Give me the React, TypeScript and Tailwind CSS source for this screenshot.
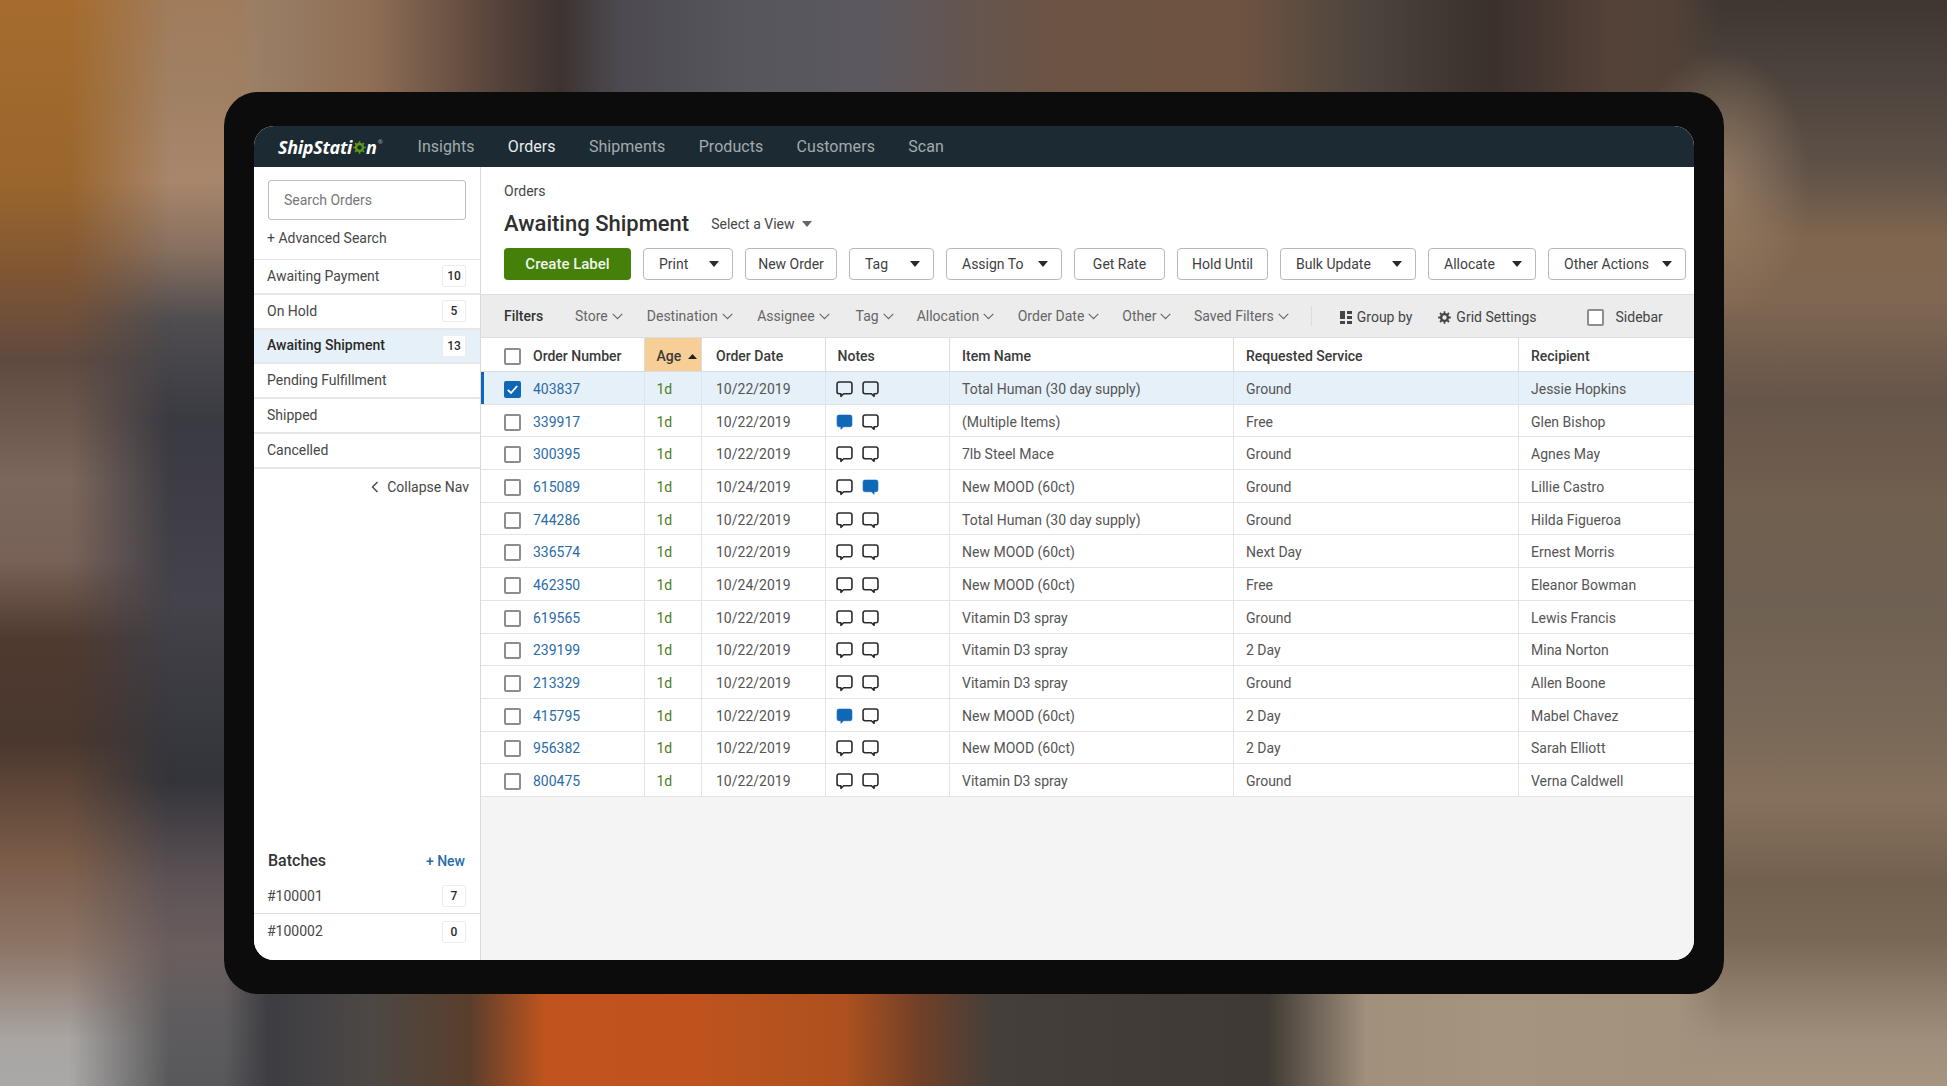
import React from "react";

const rows: [string, string, string, string, string, number][] = [
  ["403837", "10/22/2019", "Total Human (30 day supply)", "Ground", "Jessie Hopkins", 0],
  ["339917", "10/22/2019", "(Multiple Items)", "Free", "Glen Bishop", 1],
  ["300395", "10/22/2019", "7lb Steel Mace", "Ground", "Agnes May", 0],
  ["615089", "10/24/2019", "New MOOD (60ct)", "Ground", "Lillie Castro", 2],
  ["744286", "10/22/2019", "Total Human (30 day supply)", "Ground", "Hilda Figueroa", 0],
  ["336574", "10/22/2019", "New MOOD (60ct)", "Next Day", "Ernest Morris", 0],
  ["462350", "10/24/2019", "New MOOD (60ct)", "Free", "Eleanor Bowman", 0],
  ["619565", "10/22/2019", "Vitamin D3 spray", "Ground", "Lewis Francis", 0],
  ["239199", "10/22/2019", "Vitamin D3 spray", "2 Day", "Mina Norton", 0],
  ["213329", "10/22/2019", "Vitamin D3 spray", "Ground", "Allen Boone", 0],
  ["415795", "10/22/2019", "New MOOD (60ct)", "2 Day", "Mabel Chavez", 1],
  ["956382", "10/22/2019", "New MOOD (60ct)", "2 Day", "Sarah Elliott", 0],
  ["800475", "10/22/2019", "Vitamin D3 spray", "Ground", "Verna Caldwell", 0],
];

const GRID = "grid grid-cols-[163.5px_57.5px_123.5px_124.5px_284px_285px_175px]";

function Bubble({ tail, filled }: { tail: "l" | "r"; filled?: boolean }) {
  const d =
    tail === "l"
      ? "M2.8 1h10.4A1.8 1.8 0 0 1 15 2.8v7.4A1.8 1.8 0 0 1 13.2 12H7.2L4.6 14.4V12H2.8A1.8 1.8 0 0 1 1 10.2V2.8A1.8 1.8 0 0 1 2.8 1Z"
      : "M2.8 1h10.4A1.8 1.8 0 0 1 15 2.8v7.4A1.8 1.8 0 0 1 13.2 12h-1.8v2.4L8.8 12H2.8A1.8 1.8 0 0 1 1 10.2V2.8A1.8 1.8 0 0 1 2.8 1Z";
  return (
    <svg width="17" height="17" viewBox="0 0 16 16" className="shrink-0">
      <path
        d={d}
        fill={filled ? "#0f67b8" : "none"}
        stroke={filled ? "#0f67b8" : "#2b2b2b"}
        strokeWidth={filled ? 0.6 : 1.5}
        strokeLinejoin="round"
      />
    </svg>
  );
}

function Check({ on }: { on?: boolean }) {
  if (on) {
    return (
      <span className="flex h-[17px] w-[17px] shrink-0 items-center justify-center rounded-[2px] bg-[#0f67b8]">
        <svg width="13" height="13" viewBox="0 0 13 13">
          <path d="M1.8 6.8 5 10l6.2-7" fill="none" stroke="#fff" strokeWidth="1.8" />
        </svg>
      </span>
    );
  }
  return <span className="block h-[17px] w-[17px] shrink-0 rounded-[2px] border-2 border-[#8d8d8d] bg-white" />;
}

function Caret({ color = "#2a2a2a" }: { color?: string }) {
  return (
    <svg width="10" height="6" viewBox="0 0 10 6" className="shrink-0">
      <path d="M0 0h10L5 6Z" fill={color} />
    </svg>
  );
}

function Chevron() {
  return (
    <svg width="11" height="7" viewBox="0 0 11 7" className="ml-[4px] shrink-0">
      <path d="M.7.8 5.5 5.6 10.3.8" fill="none" stroke="#666" strokeWidth="1.1" />
    </svg>
  );
}

function Btn({ label, w, caret }: { label: string; w: string; caret?: boolean }) {
  return (
    <div
      className={`flex h-[32px] items-center rounded-[4px] border border-[#b9b9b9] bg-white text-[14px] text-[#3f3f3f] ${w} ${
        caret ? "justify-between pl-[15px] pr-[13px]" : "justify-center"
      }`}
    >
      <span>{label}</span>
      {caret && <Caret />}
    </div>
  );
}

function Badge({ n }: { n: number }) {
  return (
    <span className="flex h-[22px] w-[24px] items-center justify-center rounded-[2px] border border-[#ececec] bg-white text-[12px] font-medium text-[#2c2c2c]">
      {n}
    </span>
  );
}

function NavRow({ label, n, active }: { label: string; n?: number; active?: boolean }) {
  return (
    <div
      className={`flex h-[34.8px] items-center justify-between border-b-2 border-[#e6e6e6] pl-[13px] pr-[14px] text-[14px] ${
        active ? "bg-[#e6f0f8] font-medium text-[#2a2a2a]" : "text-[#474747]"
      }`}
    >
      <span>{label}</span>
      {n !== undefined && <Badge n={n} />}
    </div>
  );
}

function Filter({ label, className }: { label: string; className: string }) {
  return (
    <span className={`flex items-center text-[14px] text-[#666] ${className}`}>
      {label}
      <Chevron />
    </span>
  );
}

function Th({ label, className = "" }: { label: string; className?: string }) {
  return (
    <div className={`flex items-center border-r border-[#dcdcdc] pl-[12px] pt-[3px] text-[14px] font-medium text-[#3a3a3a] ${className}`}>
      {label}
    </div>
  );
}

export default function App() {
  return (
    <div className="relative h-[1086px] w-full overflow-hidden bg-[#55504c] pl-[224px] pt-[92px] font-['Roboto',sans-serif]">
      <div className="absolute inset-x-0 top-0 h-[140px] bg-[linear-gradient(90deg,#a56c2e_0px,#a56c2e_160px,#9a8068_250px,#8f6e55_370px,#55423a_500px,#3c3330_560px,#4c4a50_620px,#56565c_745px,#5c5860_870px,#64564f_970px,#6c5343_1055px,#6e5340_1240px,#4c443e_1365px,#3a302c_1490px,#544238_1614px,#4a4038_1800px,#3b3633_1947px)]" />
      <div className="absolute inset-x-0 bottom-0 h-[140px] bg-[linear-gradient(90deg,#a8a5a0_0px,#a8a5a0_150px,#3a3b40_225px,#3d3d42_270px,#4c4845_370px,#5a3e2c_470px,#c0541e_545px,#bf531e_695px,#ad511f_845px,#704028_920px,#443f3a_993px,#403b37_1180px,#3f3a35_1267px,#a0907c_1366px,#a5947f_1490px,#a0907c_1947px)]" />
      <div className="absolute bottom-0 left-0 top-0 w-[270px] bg-[linear-gradient(180deg,#a07c5c_0px,#a08063_90px,#a8866c_180px,#877060_250px,#4f4d50_320px,#3a3a42_420px,#44424a_600px,#33343a_780px,#5c5256_880px,#6a5e5e_950px,#5e5c5e_1020px,#58585a_1086px)] [mask-image:linear-gradient(90deg,#000_225px,transparent_270px)]" />
      <div className="absolute bottom-0 left-0 top-0 w-[170px] bg-[linear-gradient(180deg,#a56c2e_0px,#9a662d_180px,#7d5535_280px,#5f4a40_360px,#7c675c_480px,#786258_560px,#4f3a30_640px,#4a372e_740px,#7a5c48_860px,#8d7668_950px,#a8a5a3_1040px,#aaa8a6_1086px)] [mask-image:linear-gradient(90deg,#000_70px,transparent_170px)]" />
      <div className="absolute bottom-0 right-0 top-0 w-[270px] bg-[linear-gradient(180deg,#3f3632_0px,#4b423c_70px,#5f5248_170px,#80664f_240px,#7f6752_300px,#66554a_400px,#71604f_500px,#6e6052_600px,#786858_720px,#85705c_800px,#73614f_880px,#7a6857_940px,#a08f7c_1040px,#a5947f_1086px)] [mask-image:linear-gradient(270deg,#000_225px,transparent_270px)]" />
      <div className="absolute left-[1630px] top-[50px] h-[270px] w-[180px] rounded-full bg-[radial-gradient(closest-side,#a0846acc,#a0846a00)]" />

      <div className="relative h-[902px] w-[1500px] rounded-[34px] bg-[#0c0c0c] px-[30px] pb-[34px] pt-[34px]">
        <div className="flex h-full flex-col overflow-hidden rounded-[20px] bg-white">
          {/* Top nav */}
          <header className="flex h-[41px] shrink-0 items-center bg-[#1c2b33] pl-[24px]">
            <div className="flex w-[139.5px] items-center font-['Open_Sans',sans-serif] text-[18px] font-bold italic leading-none tracking-[-0.3px] text-white">
              <span>ShipStati</span>
              <svg width="13" height="13" viewBox="0 0 12 12" className="mx-[0.5px] mt-[2px] shrink-0">
                <circle cx="6" cy="6" r="3.2" fill="none" stroke="#5d9b1f" strokeWidth="2.2" />
                <path d="M6 .2v2M6 9.8v2M.2 6h2M9.8 6h2M1.9 1.9l1.4 1.4M8.7 8.7l1.4 1.4M1.9 10.1l1.4-1.4M8.7 3.3l1.4-1.4" stroke="#5d9b1f" strokeWidth="1.5" />
              </svg>
              <span>n</span>
              <span className="mb-[9px] ml-[1px] text-[6px] not-italic text-[#9aa2a6]">®</span>
            </div>
            <nav className="flex items-center gap-[33.3px] text-[16px] tracking-[0.05px] text-[#a2aaae]">
              <span>Insights</span>
              <span className="text-[#e8ecee]">Orders</span>
              <span>Shipments</span>
              <span>Products</span>
              <span>Customers</span>
              <span>Scan</span>
            </nav>
          </header>

          <div className="flex min-h-0 flex-1">
            {/* Sidebar */}
            <aside className="flex w-[227px] shrink-0 flex-col border-r border-[#dadada] bg-white">
              <div className="mx-[14px] mt-[13px] flex h-[40px] items-center rounded-[3px] border border-[#bdbdbd] pl-[15px] text-[14px] text-[#777]">
                Search Orders
              </div>
              <div className="mb-[11px] ml-[13px] mt-[8px] text-[14px] leading-[20px] text-[#474747]">+ Advanced Search</div>
              <div className="border-t border-[#e2e2e2]">
                <NavRow label="Awaiting Payment" n={10} />
                <NavRow label="On Hold" n={5} />
                <NavRow label="Awaiting Shipment" n={13} active />
                <NavRow label="Pending Fulfillment" />
                <NavRow label="Shipped" />
                <NavRow label="Cancelled" />
              </div>
              <div className="mt-[8px] flex items-center justify-end pr-[11px] text-[14px] text-[#474747]">
                <svg width="8" height="12" viewBox="0 0 8 12" className="mr-[8px]">
                  <path d="M6.5 1 1.5 6l5 5" fill="none" stroke="#474747" strokeWidth="1.4" />
                </svg>
                Collapse Nav
              </div>
              <div className="mt-auto">
                <div className="flex h-[26px] items-center justify-between pl-[14px] pr-[15px]">
                  <span className="text-[16px] font-medium text-[#333]">Batches</span>
                  <span className="text-[14px] font-medium text-[#2a6ca8]">+ New</span>
                </div>
                <div className="mt-[5px] flex h-[35px] items-center justify-between border-b border-[#e0e0e0] pl-[13px] pr-[14px] text-[14px] text-[#474747]">
                  <span>#100001</span>
                  <Badge n={7} />
                </div>
                <div className="mb-[11px] flex h-[35px] items-center justify-between pl-[13px] pr-[14px] text-[14px] text-[#474747]">
                  <span>#100002</span>
                  <Badge n={0} />
                </div>
              </div>
            </aside>

            {/* Main */}
            <main className="flex min-w-0 flex-1 flex-col bg-[#f4f4f4]">
              <div className="h-[127px] shrink-0 bg-white pl-[23px] pt-[14px]">
                <div className="text-[14px] leading-[20px] text-[#474747]">Orders</div>
                <div className="mt-[7px] flex h-[32px] items-center">
                  <h1 className="-mt-[2px] text-[22px] font-medium text-[#2f2f2f]">Awaiting Shipment</h1>
                  <span className="ml-[22px] flex items-center text-[14px] text-[#474747]">
                    Select a View
                    <span className="ml-[8px]"><Caret color="#666" /></span>
                  </span>
                </div>
                <div className="mt-[8px] flex gap-[12px]">
                  <div className="flex h-[32px] w-[127px] items-center justify-center rounded-[4px] bg-[#44800a] text-[15px] font-medium text-[#eef5e6]">
                    Create Label
                  </div>
                  <Btn label="Print" w="w-[90px]" caret />
                  <Btn label="New Order" w="w-[92px]" />
                  <Btn label="Tag" w="w-[85px]" caret />
                  <Btn label="Assign To" w="w-[116px]" caret />
                  <Btn label="Get Rate" w="w-[91px]" />
                  <Btn label="Hold Until" w="w-[91px]" />
                  <Btn label="Bulk Update" w="w-[136px]" caret />
                  <Btn label="Allocate" w="w-[108px]" caret />
                  <Btn label="Other Actions" w="w-[138px]" caret />
                </div>
              </div>

              {/* Filters */}
              <div className="flex h-[44px] shrink-0 items-center border-y border-[#dedede] bg-[#ececec] pl-[23px]">
                <span className="w-[71px] text-[14px] font-medium text-[#333]">Filters</span>
                <Filter label="Store" className="mr-[24px]" />
                <Filter label="Destination" className="mr-[24.5px]" />
                <Filter label="Assignee" className="mr-[26px]" />
                <Filter label="Tag" className="mr-[23px]" />
                <Filter label="Allocation" className="mr-[23.5px]" />
                <Filter label="Order Date" className="mr-[23px]" />
                <Filter label="Other" className="mr-[22.5px]" />
                <Filter label="Saved Filters" className="mr-[22.5px]" />
                <span className="h-[20px] w-px bg-[#dcdcdc]" />
                <span className="ml-[27.5px] mt-[2px] flex items-center text-[14px] text-[#444]">
                  <svg width="12" height="13" viewBox="0 0 12 13" className="mr-[5px]">
                    <path d="M0 0h5v8H0ZM7 0h5v3H7ZM7 5h5v3H7ZM0 10h5v3H0ZM7 10h5v3H7Z" fill="#444" />
                  </svg>
                  Group by
                </span>
                <span className="ml-[26px] mt-[2px] flex items-center text-[14px] text-[#444]">
                  <svg width="13" height="13" viewBox="0 0 13 13" className="mr-[5px]">
                    <circle cx="6.5" cy="6.5" r="3.4" fill="none" stroke="#444" strokeWidth="2.4" />
                    <path d="M6.5.2v2.2M6.5 10.6v2.2M.2 6.5h2.2M10.6 6.5h2.2M2 2l1.6 1.6M9.4 9.4 11 11M2 11l1.6-1.6M9.4 3.6 11 2" stroke="#444" strokeWidth="1.8" />
                  </svg>
                  Grid Settings
                </span>
                <span className="ml-[50px] mt-[2px] flex items-center text-[14px] text-[#444]">
                  <span className="mr-[12px] block"><Check /></span>
                  Sidebar
                </span>
              </div>

              {/* Table */}
              <div className={`${GRID} h-[34px] shrink-0 border-b border-[#dcdcdc] bg-white`}>
                <div className="flex items-center gap-[12px] border-r border-[#dcdcdc] pl-[23px] pt-[3px] text-[14px] font-medium text-[#3a3a3a]">
                  <Check />
                  Order Number
                </div>
                <div className="flex items-center border-r border-[#dcdcdc] bg-[#f7cf96] pl-[12px] pt-[3px] text-[14px] font-medium text-[#3a3a3a]">
                  Age
                  <svg width="9" height="5" viewBox="0 0 9 5" className="ml-[7px]">
                    <path d="M0 5h9L4.5 0Z" fill="#222" />
                  </svg>
                </div>
                <Th label="Order Date" className="pl-[14px]" />
                <Th label="Notes" className="pl-[12.5px]" />
                <Th label="Item Name" />
                <Th label="Requested Service" />
                <Th label="Recipient" className="border-r-0" />
              </div>
              {rows.map((r, i) => (
                <div
                  key={r[0]}
                  className={`${GRID} h-[32.7px] shrink-0 border-b border-[#e4e4e4] text-[14px] text-[#555] ${i === 0 ? "bg-[#e6f0f8]" : "bg-white"}`}
                >
                  <div className={`flex items-center gap-[12px] border-r border-[#e4e4e4] pl-[23px] pt-[3px] ${i === 0 ? "shadow-[inset_3px_0_0_#0f67b8]" : ""}`}>
                    <Check on={i === 0} />
                    <span className="text-[#2a6ca8]">{r[0]}</span>
                  </div>
                  <div className="flex items-center border-r border-[#e4e4e4] pl-[12px] pt-[3px] text-[#4e7d1c]">1d</div>
                  <div className="flex items-center border-r border-[#e4e4e4] pl-[14px] pt-[3px]">{r[1]}</div>
                  <div className="flex items-center gap-[9px] border-r border-[#e4e4e4] pl-[10.5px] pt-[3px]">
                    <Bubble tail="l" filled={r[5] === 1} />
                    <Bubble tail="r" filled={r[5] === 2} />
                  </div>
                  <div className="flex items-center border-r border-[#e4e4e4] pl-[12px] pt-[3px]">{r[2]}</div>
                  <div className="flex items-center border-r border-[#e4e4e4] pl-[12px] pt-[3px]">{r[3]}</div>
                  <div className="flex items-center pl-[12px] pt-[3px]">{r[4]}</div>
                </div>
              ))}
            </main>
          </div>
        </div>
      </div>
    </div>
  );
}
